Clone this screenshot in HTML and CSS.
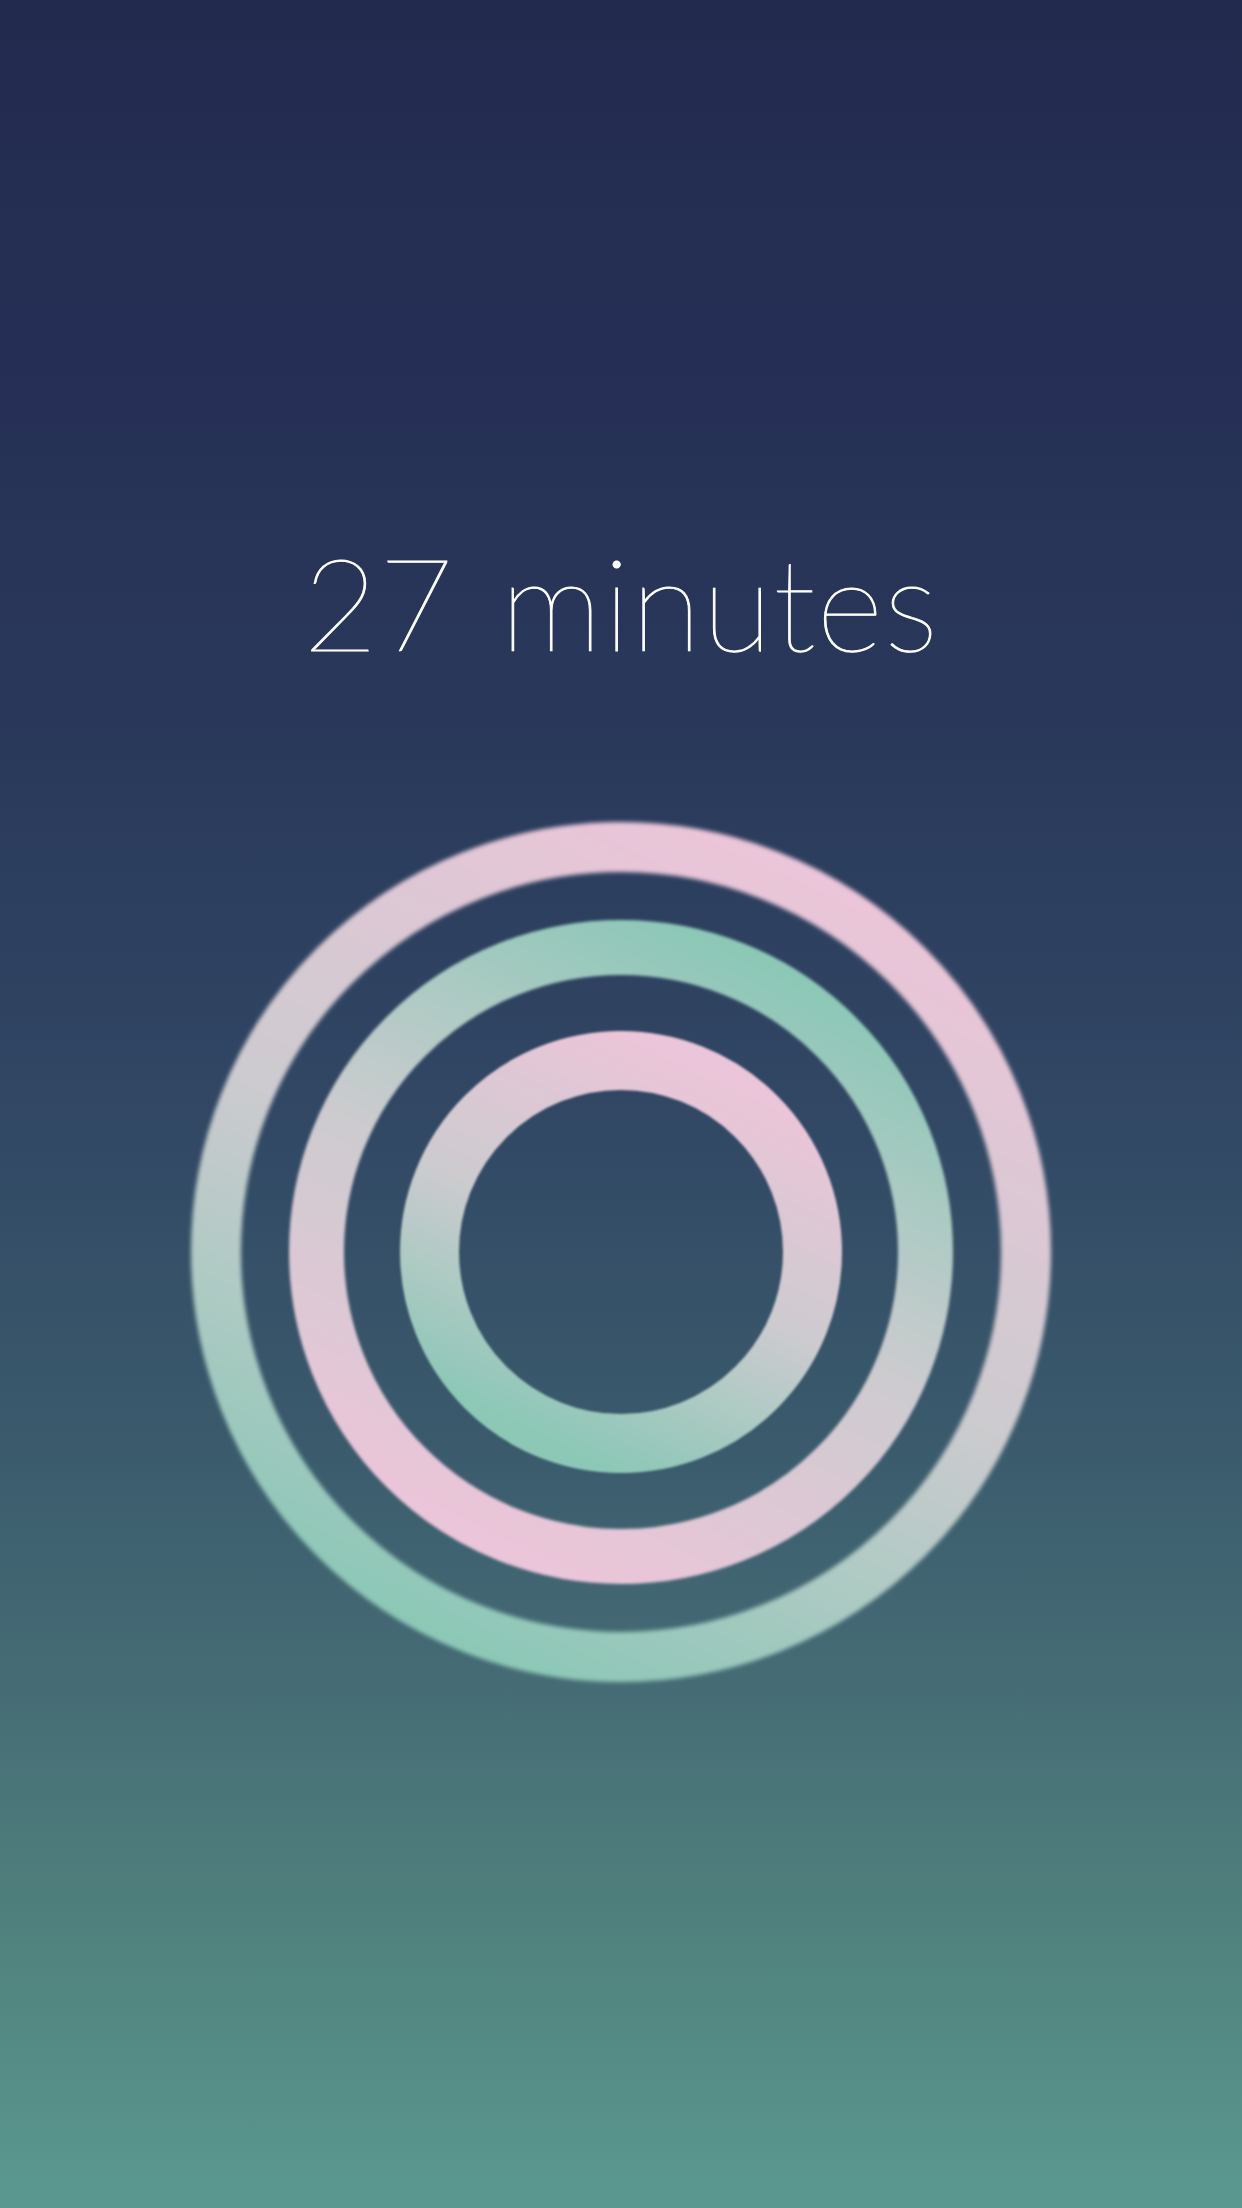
FILE: index.html
```html
<!DOCTYPE html>
<html>
<head>
<meta charset="utf-8">
<link rel="stylesheet" href="styles.css">
</head>
<body>
<main class="screen">
  <h1 class="duration">27 minutes</h1>
  <svg class="rings" width="880" height="880" viewBox="0 0 880 880">
    <defs>
      <linearGradient id="pinkTeal" x1="0.72" y1="0.03" x2="0.28" y2="0.97">
        <stop offset="0" stop-color="#ebc5d9"/>
        <stop offset="0.5" stop-color="#cdcbcf"/>
        <stop offset="1" stop-color="#8dc8b7"/>
      </linearGradient>
      <linearGradient id="tealPink" x1="0.72" y1="0.03" x2="0.28" y2="0.97">
        <stop offset="0" stop-color="#8dc8b7"/>
        <stop offset="0.5" stop-color="#cdcbcf"/>
        <stop offset="1" stop-color="#ebc5d9"/>
      </linearGradient>
      <filter id="blurOuter" x="-10%" y="-10%" width="120%" height="120%">
        <feGaussianBlur stdDeviation="2.2"/>
      </filter>
      <filter id="blurMid" x="-10%" y="-10%" width="120%" height="120%">
        <feGaussianBlur stdDeviation="1.5"/>
      </filter>
      <filter id="blurInner" x="-10%" y="-10%" width="120%" height="120%">
        <feGaussianBlur stdDeviation="0.8"/>
      </filter>
    </defs>
    <circle cx="440" cy="440" r="405" fill="none" stroke="url(#pinkTeal)" stroke-width="50" filter="url(#blurOuter)"/>
    <circle cx="440" cy="440" r="304.5" fill="none" stroke="url(#tealPink)" stroke-width="55" filter="url(#blurMid)"/>
    <circle cx="440" cy="440" r="191.5" fill="none" stroke="url(#pinkTeal)" stroke-width="59" filter="url(#blurInner)"/>
  </svg>
</main>
</body>
</html>
```

FILE: styles.css
```css
html, body {
  margin: 0;
  padding: 0;
}

body {
  width: 1242px;
  height: 2208px;
  overflow: hidden;
  background: linear-gradient(180deg,
    #222a4e 0%,
    #263056 18%,
    #2a3a5b 35%,
    #314764 50%,
    #3a5a6c 65%,
    #476f76 78%,
    #528680 90%,
    #5b9990 100%);
}

.screen {
  display: flex;
  flex-direction: column;
  align-items: center;
  height: 2208px;
}

.duration {
  margin: 0;
  padding-top: 521px;
  font-family: "Lato", "Liberation Sans", sans-serif;
  font-weight: 100;
  font-size: 129px;
  line-height: 160px;
  color: #ffffff;
  -webkit-text-stroke: 1px #ffffff;
  letter-spacing: 1px;
  word-spacing: 8px;
  white-space: nowrap;
}

.rings {
  display: block;
  margin-top: 131px;
}
```
